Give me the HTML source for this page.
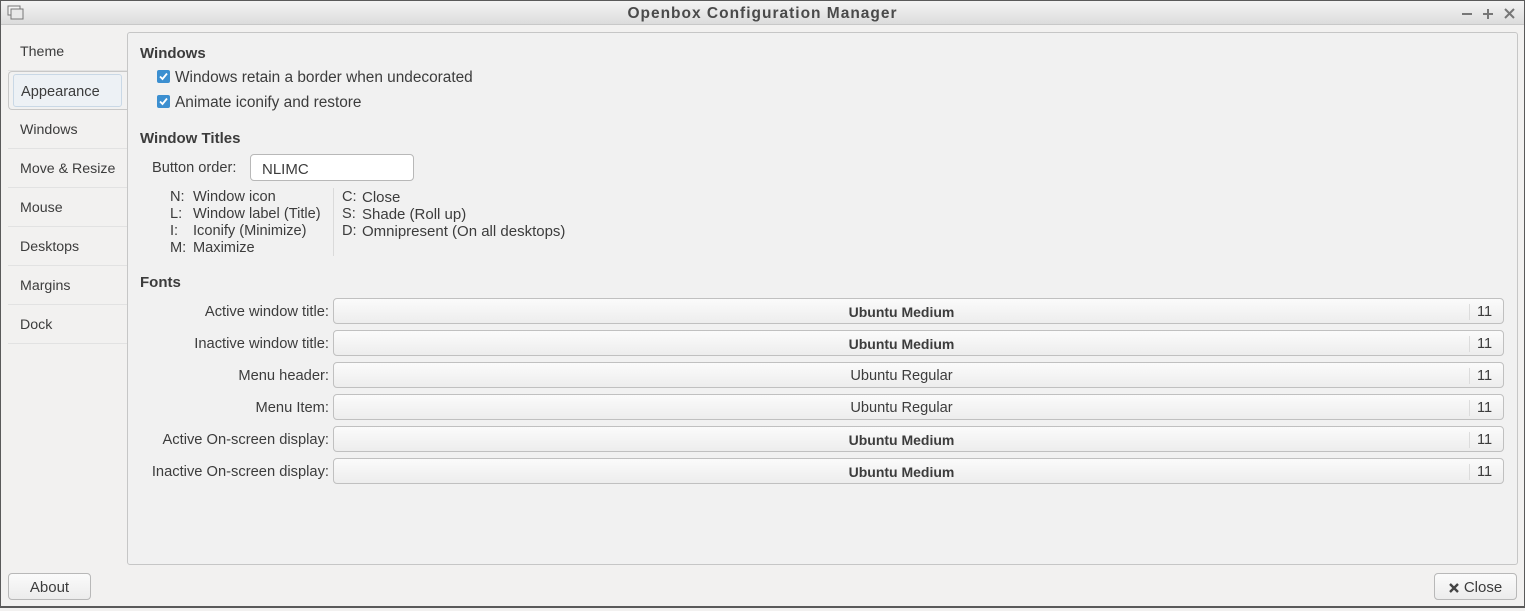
<!DOCTYPE html>
<html><head><style>
*{box-sizing:border-box;margin:0;padding:0}
body{width:1525px;height:611px;background:#f2f1f0;font-family:"Liberation Sans",sans-serif;font-size:14.6px;color:#3c3c3c;position:relative;overflow:hidden}
.abs{position:absolute;white-space:nowrap}
#frame{position:absolute;left:0;top:0;width:1525px;height:608px;border:1px solid #5a5a5a;border-bottom:2px solid #5a5a5a}
#title{position:absolute;left:1px;top:1px;width:1523px;height:24px;background:linear-gradient(#f4f4f4,#dcdcdc);border-bottom:1px solid #c8c8c8}
#title .t{position:absolute;left:0;width:100%;top:4px;text-align:center;font-weight:bold;font-size:15.5px;color:#4a4a4a;letter-spacing:1px}
#panel{position:absolute;left:127px;top:32px;width:1391px;height:533px;border:1px solid #c6c6c6;border-radius:3px;background:#f1f1f1}
.tab{position:absolute;left:8px;width:119px;height:39px;border-bottom:1px solid #e2e2e2;font-size:14.2px}
.tab span{position:absolute;left:12px;top:12px}
.sel{position:absolute;left:8px;top:71px;width:120px;height:39px;border:1px solid #c8c8c8;border-right:none;border-radius:4px 0 0 4px;background:#f1f1f1;font-size:14.6px}
.sel div{position:absolute;left:4px;top:2px;width:109px;height:33px;border:1px solid #c9d8e6;border-radius:3px;background:#edf1f5}
.h{font-weight:bold;color:#3c3c3c;font-size:15px}
.cb{position:absolute;width:13px;height:13px;background:#3c8fd0;border-radius:2px}
.cb svg{position:absolute;left:1px;top:1px}
.fb{position:absolute;left:333px;width:1171px;height:26px;border:1px solid #c0c0c0;border-radius:4px;background:linear-gradient(#fbfbfb,#ededed)}
.fb .n{position:absolute;left:0;width:1135px;top:5px;text-align:center;font-weight:bold;font-size:14px;color:#3c3c3c}
.fb .n.r{font-weight:normal;font-size:14.6px}
.fb .s{position:absolute;left:1135px;top:5px;height:16px;border-left:1px solid #dcdcdc}
.fb .z{position:absolute;left:1143px;top:5px}
.lbl{position:absolute;right:1196px;text-align:right;white-space:nowrap;font-size:14.7px}
.btn{position:absolute;height:27px;border:1px solid #b8b8b8;border-radius:4px;background:linear-gradient(#fbfbfb,#ececec);text-align:center;padding-top:5px;color:#3c3c3c;font-size:15px}
</style></head><body>
<div id="frame"></div>
<div id="title">
<svg class="abs" style="left:6px;top:4px" width="18" height="16"><rect x="1" y="1" width="12" height="9" fill="#f4f4f4" stroke="#777"/><rect x="4" y="4" width="12" height="10" fill="#e8e8e8" stroke="#777"/></svg>
<div class="t">Openbox Configuration Manager</div>
<svg class="abs" style="left:1460px;top:6px" width="60" height="14" stroke="#777" stroke-width="2"><path d="M1 7H11"/><path d="M22 7H32M27 2V12"/><path d="M44 2L53 11M53 2L44 11"/></svg>
</div>

<div class="tab" style="top:32px"><span>Theme</span></div>
<div class="sel"><div></div><span class="abs" style="left:12px;top:12px">Appearance</span></div>
<div class="tab" style="top:110px"><span>Windows</span></div>
<div class="tab" style="top:149px"><span>Move &amp; Resize</span></div>
<div class="tab" style="top:188px"><span>Mouse</span></div>
<div class="tab" style="top:227px"><span>Desktops</span></div>
<div class="tab" style="top:266px"><span>Margins</span></div>
<div class="tab" style="top:305px"><span>Dock</span></div>

<div id="panel"></div>
<div class="abs h" style="left:140px;top:45px">Windows</div>
<div class="cb" style="left:157px;top:70px"><svg width="11" height="11"><path d="M2 5.5L4.5 8L9 2.5" stroke="#fff" stroke-width="1.8" fill="none"/></svg></div>
<div class="abs" style="left:175px;top:69px;font-size:15.4px">Windows retain a border when undecorated</div>
<div class="cb" style="left:157px;top:95px"><svg width="11" height="11"><path d="M2 5.5L4.5 8L9 2.5" stroke="#fff" stroke-width="1.8" fill="none"/></svg></div>
<div class="abs" style="left:175px;top:94px;font-size:15.4px">Animate iconify and restore</div>
<div class="abs h" style="left:140px;top:130px">Window Titles</div>
<div class="abs" style="left:152px;top:160px;font-size:14.6px">Button order:</div>
<div class="abs" style="left:250px;top:154px;width:164px;height:27px;border:1px solid #b8b8b8;border-radius:4px;background:#fff;padding:6px 0 0 11px;font-size:15px">NLIMC</div>

<div class="abs" style="left:170px;top:189px;line-height:17px">N:<br>L:<br>I:<br>M:</div>
<div class="abs" style="left:193px;top:189px;line-height:17px">Window icon<br>Window label (Title)<br>Iconify (Minimize)<br>Maximize</div>
<div class="abs" style="left:333px;top:188px;height:68px;border-left:1px solid #dadada"></div>
<div class="abs" style="left:342px;top:189px;line-height:17px">C:<br>S:<br>D:</div>
<div class="abs" style="left:362px;top:189px;line-height:17px;font-size:15px">Close<br>Shade (Roll up)<br>Omnipresent (On all desktops)</div>

<div class="abs h" style="left:140px;top:274px">Fonts</div>

<div class="lbl" style="top:304px">Active window title:</div>
<div class="fb" style="top:298px"><div class="n">Ubuntu Medium</div><div class="s"></div><div class="z">11</div></div>
<div class="lbl" style="top:336px">Inactive window title:</div>
<div class="fb" style="top:330px"><div class="n">Ubuntu Medium</div><div class="s"></div><div class="z">11</div></div>
<div class="lbl" style="top:368px">Menu header:</div>
<div class="fb" style="top:362px"><div class="n r">Ubuntu Regular</div><div class="s"></div><div class="z">11</div></div>
<div class="lbl" style="top:400px">Menu Item:</div>
<div class="fb" style="top:394px"><div class="n r">Ubuntu Regular</div><div class="s"></div><div class="z">11</div></div>
<div class="lbl" style="top:432px">Active On-screen display:</div>
<div class="fb" style="top:426px"><div class="n">Ubuntu Medium</div><div class="s"></div><div class="z">11</div></div>
<div class="lbl" style="top:464px">Inactive On-screen display:</div>
<div class="fb" style="top:458px"><div class="n">Ubuntu Medium</div><div class="s"></div><div class="z">11</div></div>

<div class="btn" style="left:8px;top:573px;width:83px">About</div>
<div class="btn" style="left:1434px;top:573px;width:83px"><svg style="vertical-align:-1px;margin-right:5px" width="10" height="10"><path d="M1 1L9 9M9 1L1 9" stroke="#444" stroke-width="2.4"/></svg>Close</div>
</body></html>
